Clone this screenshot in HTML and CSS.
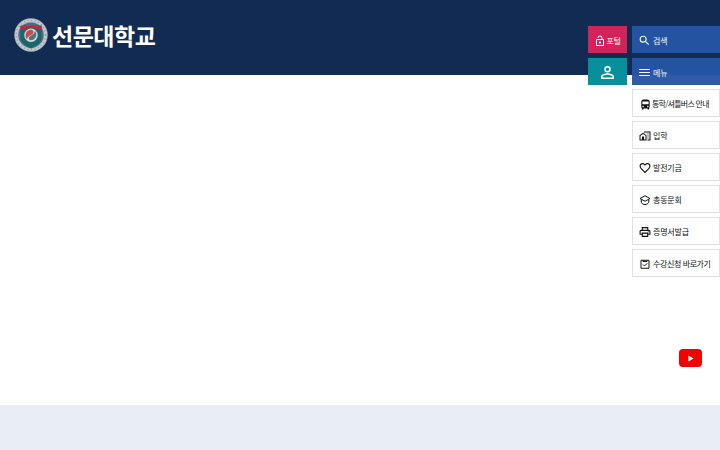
FILE: index.html
```html
<!DOCTYPE html>
<html lang="ko">
<head>
    <meta charset="UTF-8">
    <meta name="viewport" content="width=device-width, initial-scale=1.0">
    <title>선문대학교</title>
    <link rel="stylesheet" href="styles.css">
</head>
<body>
    <header class="header">
        <a href="#" class="logo">
            <svg class="emblem" viewBox="0 0 34 34">
                <circle cx="17" cy="17" r="16.7" fill="#a9b3bd"/>
                <circle cx="17" cy="17" r="14.6" fill="none" stroke="#c3cad0" stroke-width="2.6"/>
                <circle cx="17" cy="17" r="14.6" fill="none" stroke="#8f9cab" stroke-width="1.4" stroke-dasharray="1.2 2.4"/>
                <circle cx="17" cy="17" r="12.6" fill="#536a80"/>
                <path d="M6.5 8h21v12c0 4.5-4.5 8-10.5 10.5C11 28 6.500 24.500 6.500 20z" fill="#17676b"/>
                <path d="M6.500 7.500h21v4H24L17 9.500 10 11.500H6.500z" fill="#b52a45"/>
                <circle cx="17" cy="17.300" r="6.700" fill="#d5dcdc"/>
                <path d="M13 21.500c-3-4-1-9.500 4-9.700 2.500 0 3.500 2.500 1.500 4.300-2 1.500-4.500 2-5.500 5.400z" fill="#c94a52"/>
                <path d="M21 13c3 4 .5 9-4 9.300-2.500 0-3-2.500-1-4 2-1.500 4.200-2 5-5.300z" fill="#55747b"/>
            </svg>
            <span class="logo-text">선문대학교</span>
        </a>
    </header>
    <main class="main"></main>
    <footer class="footer"></footer>

    <!-- Quick menu -->
    <div class="quick">
        <div class="quick-user">
            <a href="#" class="portal">
                <svg viewBox="0 0 24 24"><path d="M12 17c1.100 0 2-.9 2-2s-.9-2-2-2-2 .9-2 2 .9 2 2 2zm6-9h-1V6c0-2.760-2.240-5-5-5S7 3.240 7 6h1.900c0-1.710 1.390-3.100 3.100-3.100s3.100 1.390 3.100 3.100v2H6c-1.100 0-2 .9-2 2v10c0 1.100.9 2 2 2h12c1.100 0 2-.9 2-2V10c0-1.100-.9-2-2-2zm0 12H6V10h12v10z"/></svg>
                <span>포털</span>
            </a>
            <a href="#" class="login">
                <svg viewBox="4 4 16 16"><path d="M12 5.900a2.100 2.100 0 1 1 0 4.200 2.100 2.100 0 0 1 0-4.200m0 9c2.970 0 6.100 1.460 6.100 2.100v1.100H5.900V17c0-.64 3.130-2.100 6.100-2.100M12 4a4 4 0 1 0 0 8 4 4 0 0 0 0-8zm0 9c-2.670 0-8 1.340-8 4v3h16v-3c0-2.660-5.330-4-8-4z"/></svg>
            </a>
        </div>
        <nav class="quick-menu">
            <a href="#" class="item blue">
                <svg viewBox="0 0 24 24"><path d="M15.500 14h-.79l-.28-.27A6.470 6.470 0 0 0 16 9.500 6.500 6.500 0 1 0 9.500 16c1.610 0 3.090-.59 4.230-1.570l.27.28v.79l5 4.990L20.490 19l-4.990-5zm-6 0a4.500 4.500 0 1 1 0-9 4.500 4.500 0 0 1 0 9z"/></svg>
                <span>검색</span>
            </a>
            <a href="#" class="item blue menu">
                <svg viewBox="0 0 24 24"><path d="M2 18.500h20v-2H2v2zm0-5.500h20v-2H2v2zm0-7.500v2h20v-2H2z"/></svg>
                <span>메뉴</span>
            </a>
            <a href="#" class="item bus">
                <svg viewBox="2 1 20 21"><path d="M4 16c0 .88.390 1.670 1 2.220V20a1 1 0 0 0 1 1h1a1 1 0 0 0 1-1v-1h8v1a1 1 0 0 0 1 1h1a1 1 0 0 0 1-1v-1.780c.61-.55 1-1.340 1-2.220V6c0-3.500-3.580-4-8-4s-8 .5-8 4v10zm3.500 1a1.500 1.500 0 1 1 0-3 1.500 1.500 0 0 1 0 3zm9 0a1.500 1.500 0 1 1 0-3 1.500 1.500 0 0 1 0 3zm1.500-6H6V6h12v5z"/></svg>
                <span>통학/셔틀버스 안내</span>
            </a>
            <a href="#" class="item">
                <svg viewBox="0 0 24 24"><path d="M17 15h2v2h-2zM17 11h2v2h-2zM17 7h2v2h-2zM13.740 7l1.260.84V7z"/><path d="M10 3v1.510l2 1.330V5h9v14h-4v2h6V3z"/><path d="M8.170 5.700 15 10.250V21H1v-10.520L8.170 5.700zM10 19h3v-7.840L8.170 8.090 3 11.380V19h3v-6h4v6z"/></svg>
                <span>입학</span>
            </a>
            <a href="#" class="item">
                <svg viewBox="1 1 22 22"><path d="M16.500 3c-1.740 0-3.410.81-4.500 2.090C10.910 3.810 9.240 3 7.500 3 4.420 3 2 5.420 2 8.500c0 3.780 3.400 6.860 8.550 11.540L12 21.350l1.450-1.320C18.600 15.360 22 12.280 22 8.500 22 5.420 19.580 3 16.500 3zm-4.400 15.550-.1.100-.1-.1C7.140 14.240 4 11.390 4 8.500 4 6.500 5.500 5 7.500 5c1.540 0 3.040.99 3.570 2.360h1.870C13.460 5.990 14.960 5 16.500 5c2 0 3.500 1.500 3.500 3.500 0 2.890-3.140 5.740-7.900 10.050z"/></svg>
                <span>발전기금</span>
            </a>
            <a href="#" class="item">
                <svg viewBox="0 0 24 24" class="line"><path d="M12 3.500 22 9l-10 5.500L2 9zM4.500 11v5.500c1.500 3 4.500 4.500 7.500 4.500s6-1.500 7.500-4.500V11"/></svg>
                <span>총동문회</span>
            </a>
            <a href="#" class="item">
                <svg viewBox="1 1 22 22"><path d="M19 8h-1V3H6v5H5c-1.660 0-3 1.340-3 3v6h4v4h12v-4h4v-6c0-1.660-1.340-3-3-3zM8 5h8v3H8V5zm8 12v2H8v-4h8v2zm2-2v-2H6v2H4v-4c0-.55.45-1 1-1h14c.55 0 1 .45 1 1v4h-2z"/><circle cx="18" cy="11.500" r="1"/></svg>
                <span>증명서발급</span>
            </a>
            <a href="#" class="item">
                <svg viewBox="0 0 24 24" class="line"><path d="M4 4.500h16v16H4zM8 4.500V7h8V4.500M8 13l3 3 5.500-5.500"/></svg>
                <span>수강신청 바로가기</span>
            </a>
        </nav>
    </div>

    <a href="#" class="youtube">
        <svg viewBox="0 0 6 8"><path d="M0 0.500 6 4 0 7.500z"/></svg>
    </a>
</body>
</html>
```
FILE: styles.css
```css
body {
    margin: 0;
    height: 450px;
    display: flex;
    flex-direction: column;
    overflow: hidden;
    background: #fff;
    font-family: "Noto Sans CJK KR", "Noto Sans", sans-serif;
    color: #111;
}
a {
    color: inherit;
    text-decoration: none;
}
svg {
    display: block;
    flex-shrink: 0;
    fill: currentColor;
}
.header {
    height: 75px;
    background: #122b52;
}
.logo {
    display: flex;
    align-items: center;
    width: 160px;
    padding: 18px 0 0 14px;
    color: #fff;
}
.emblem {
    width: 34px;
    height: 34px;
}
.logo-text {
    margin-left: 4px;
    font-size: 23px;
    font-weight: 700;
    line-height: 34px;
    letter-spacing: -0.5px;
    white-space: nowrap;
}
.main {
    flex: 1;
}
.footer {
    height: 45px;
    background: #e9edf5;
}

/* Quick menu */
.quick {
    position: absolute;
    top: 26px;
    right: 0;
    display: flex;
    gap: 5px;
    font-size: 8px;
    line-height: 12px;
    white-space: nowrap;
}
.quick-user {
    display: flex;
    flex-direction: column;
    gap: 5px;
    width: 39px;
    color: #fff;
}
.portal, .login {
    display: flex;
    align-items: center;
    justify-content: center;
    box-sizing: border-box;
    height: 27px;
    padding-top: 2px;
}
.portal {
    background: #d0245a;
}
.portal svg {
    width: 12px;
    height: 12px;
}
.portal span {
    letter-spacing: -0.3px;
}
.login {
    background: #078f9c;
}
.login svg {
    width: 13px;
    height: 13px;
}
.quick-menu {
    display: flex;
    flex-direction: column;
    gap: 4px;
    width: 88px;
}
.item {
    display: flex;
    align-items: center;
    gap: 2px;
    box-sizing: border-box;
    height: 28px;
    padding: 2px 0 0 6px;
    border: 1px solid #e2e2e2;
    background: #fff;
}
.item span {
    letter-spacing: -0.2px;
}
.item svg {
    width: 12px;
    height: 12px;
}
.item .line {
    fill: none;
    stroke: currentColor;
    stroke-width: 2;
}
.blue {
    height: 27px;
    margin-bottom: 1px;
    border: 0;
    background: #2454a1;
    color: #f2f6fc;
}
.item.blue svg {
    width: 13px;
    height: 13px;
}
.menu {
    margin-bottom: 0;
    background: linear-gradient(#2454a1 17px, #305ca6 17px);
}
.item.bus {
    gap: 1px;
    padding-left: 7px;
}
.item.bus svg {
    width: 11px;
    height: 11px;
}
.item.bus span {
    letter-spacing: -0.75px;
}
.item:last-child span {
    letter-spacing: -0.4px;
}

.youtube {
    position: absolute;
    top: 349px;
    right: 18px;
    display: flex;
    align-items: center;
    justify-content: center;
    width: 23px;
    height: 18px;
    border-radius: 4px;
    background: #f40000;
    color: #fff;
}
.youtube svg {
    width: 6px;
    height: 7px;
}
```
